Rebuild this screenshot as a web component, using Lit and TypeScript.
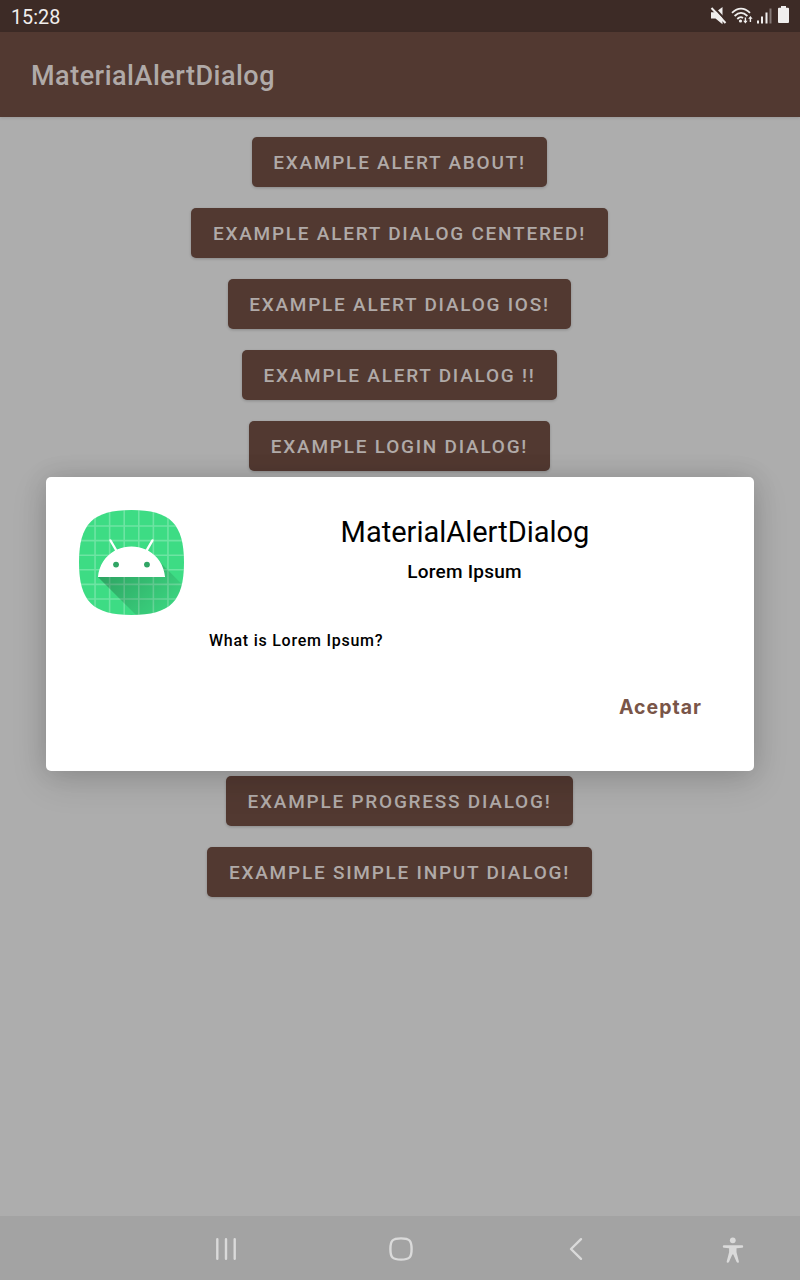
import { LitElement, html, css } from "lit";
import { customElement } from "lit/decorators.js";

const upperButtons = [
  "Example alert about!",
  "Example alert dialog centered!",
  "Example alert dialog iOS!",
  "Example alert dialog !!",
  "Example login dialog!",
];
const lowerButtons = ["Example progress dialog!", "Example simple input dialog!"];

@customElement("launcher-icon")
class LauncherIcon extends LitElement {
  static styles = css`
    :host { display: block; width: 105px; height: 105px; }
    svg { display: block; width: 100%; height: 100%; }
  `;
  render() {
    return html`<svg viewBox="18 18 72 72">
      <defs>
        <clipPath id="shape">
          <path d="M54 18C80.500 18 90 27.500 90 54S80.500 90 54 90S18 80.500 18 54S27.500 18 54 18Z" />
        </clipPath>
        <linearGradient id="shade" gradientUnits="userSpaceOnUse" x1="42.949" y1="49.590" x2="85.848" y2="92.496">
          <stop offset="0" stop-color="#000" stop-opacity=".267" />
          <stop offset="1" stop-color="#000" stop-opacity="0" />
        </linearGradient>
      </defs>
      <g clip-path="url(#shape)">
        <path fill="#3ddc84" d="M18 18h72v72H18z" />
        <path stroke="#fff" stroke-opacity=".25" stroke-width="1.100" fill="none"
          d="M29 18v72M39 18v72M49 18v72M59 18v72M69 18v72M79 18v72M18 29h72M18 39h72M18 49h72M18 59h72M18 69h72M18 79h72" />
        <path fill="url(#shade)" d="M31 63.928c0 0 6.4-11 12.1-13.1c7.2-2.6 26-1.4 26-1.4l38.1 38.1L107 108.928l-32-1L31 63.928z" />
        <path fill="#fff" d="M65.3 45.828l3.8-6.6c.2-.4.1-.9-.3-1.1c-.4-.2-.9-.1-1.1.3l-3.9 6.7c-6.3-2.8-13.4-2.8-19.7 0l-3.9-6.7c-.2-.4-.7-.5-1.1-.3C38.8 38.328 38.7 38.828 38.9 39.228l3.8 6.6C36.2 49.428 31.7 56.028 31 63.928h46C76.3 56.028 71.8 49.428 65.3 45.828z" />
        <circle cx="43.400" cy="55.400" r="2" fill="#31a565" />
        <circle cx="64.600" cy="55.400" r="2" fill="#31a565" />
      </g>
    </svg>`;
  }
}

@customElement("status-bar")
class StatusBar extends LitElement {
  static styles = css`
    :host {
      display: flex; align-items: center; justify-content: space-between;
      height: 32px; box-sizing: border-box; padding: 2px 0 0 11px;
      background: #3d2b26; color: #f0eeed; font-size: 19.800px;
    }
    .icons { display: block; width: 100px; height: 32px; margin-top: -2px; }
  `;
  render() {
    return html`<span>15:28</span>
      <svg class="icons" viewBox="700 0 100 32" fill="#f0eeed">
        <path d="M711 12.200h4.500l7-5.200v17.200l-7-5.700H711z" />
        <path d="M713 6.500l14 15" stroke="#3d2b26" stroke-width="2" />
        <path d="M711.500 8l14 15" stroke="#f0eeed" stroke-width="2" fill="none" />
        <g fill="none" stroke="#f0eeed" stroke-width="1.800">
          <path d="M732 12.800Q741 4.500 750 12.800M734.600 16Q741 9.800 747.400 16M737.300 19Q740.500 15.800 743 18.200" />
        </g>
        <circle cx="740.500" cy="21" r="1.600" />
        <path d="M744.700 17.500h1.400v3.200h1.500l-2.200 2.800l-2.200-2.800h1.500zM751.100 22h-1.400v-3.200h-1.500l2.200-2.800l2.200 2.800h-1.500z" />
        <path d="M757 20.500h2v3h-2zM761 16.500h2v7h-2zM765.500 12.500h2v11h-2z" />
        <path d="M769.500 8.500h2v15h-2z" opacity=".4" />
        <path d="M781 6h5v1.700h2q1 0 1 1V22q0 1-1 1h-9q-1 0-1-1V8.700q0-1 1-1h2z" />
      </svg>`;
  }
}

@customElement("nav-bar")
class NavBar extends LitElement {
  static styles = css`
    :host { display: block; height: 64px; background: #a3a3a3; }
    svg { display: block; }
  `;
  render() {
    return html`<svg width="800" height="64" viewBox="0 1216 800 64" fill="none" stroke="#dadada" stroke-width="2.400">
      <path stroke-linecap="round" d="M217.300 1239.200v19.600M226 1239.200v19.600M234.700 1239.200v19.600" />
      <path d="M401 1238.400C409.500 1238.400 411.600 1240.500 411.600 1249S409.500 1259.600 401 1259.600S390.400 1257.500 390.400 1249S392.500 1238.400 401 1238.400Z" />
      <path stroke-linecap="round" stroke-linejoin="round" d="M581 1239.200L571 1249L581 1258.800" />
      <g fill="#dadada" stroke="none">
        <circle cx="732.800" cy="1240.300" r="2.900" />
        <path d="M724 1245.200h18q1.200 0 1.200 1.250T742 1247.700l-5.500.6v4l2.400 9.200q.2 1.200-.9 1.200t-1.500-.9l-3.200-7.300h-1l-3.200 7.300q-.4.9-1.500.9t-.9-1.200l2.400-9.200v-4l-5.100-.6q-1.200 0-1.200-1.250T724 1245.200z" />
      </g>
    </svg>`;
  }
}

@customElement("alert-dialog")
class AlertDialog extends LitElement {
  static styles = css`
    :host {
      display: grid; grid-template-columns: 105px 1fr; column-gap: 25px;
      box-sizing: border-box; padding: 33px;
      background: #fff; border-radius: 5px; color: #000;
      box-shadow: 0 10px 36px rgba(0, 0, 0, .13), 0 0 24px rgba(0, 0, 0, .12);
    }
    .content { display: flex; flex-direction: column; }
    .title { margin-top: 3px; font-size: 29px; line-height: 38px; text-align: center; }
    .subtitle { margin: 8px 1px 0 0; font-size: 19px; line-height: 26px; font-weight: 500; letter-spacing: .25px; text-align: center; }
    .message { margin-top: 46px; font-size: 16px; line-height: 20px; font-weight: 500; letter-spacing: .75px; }
    .action {
      align-self: flex-end; margin: 41px 19px 0 0; padding: 0; border: 0; background: none;
      font: 700 19.500px/30px Inter, sans-serif; letter-spacing: 1px; color: #795548;
    }
  `;
  render() {
    return html`<launcher-icon></launcher-icon>
      <div class="content">
        <div class="title">MaterialAlertDialog</div>
        <div class="subtitle">Lorem Ipsum</div>
        <div class="message">What is Lorem Ipsum?</div>
        <button class="action">Aceptar</button>
      </div>`;
  }
}

@customElement("app-root")
class AppRoot extends LitElement {
  static styles = css`
    :host {
      display: flex; flex-direction: column; position: relative;
      width: 800px; height: 1280px; overflow: hidden;
      background: #adadad; font-family: Roboto, sans-serif;
    }
    .toolbar {
      display: flex; align-items: center; height: 85px; box-sizing: border-box; padding: 3px 31px 0;
      background: #523931; color: #b0aaa8; font-size: 27px; font-weight: 500; letter-spacing: .500px;
      box-shadow: 0 1px 3px rgba(0, 0, 0, .12);
    }
    .examples { flex: 1; display: flex; flex-direction: column; padding-top: 20px; }
    .group { display: flex; flex-direction: column; align-items: center; gap: 21px; }
    .group + .group { margin-top: 305px; }
    .example {
      height: 50px; border: 0; border-radius: 5px; padding: 1px 21.600px 0; margin-right: 1px;
      background: #523931; color: #b0aaa8;
      font: 500 19px/49px Roboto, sans-serif; letter-spacing: 1.760px; text-transform: uppercase; white-space: nowrap;
      box-shadow: 0 1px 3px rgba(0, 0, 0, .2);
    }
    .dialog { position: absolute; left: 46px; top: 477px; width: 708px; height: 294px; }
  `;
  render() {
    const group = (labels: string[]) => html`<div class="group">
      ${labels.map((label) => html`<button class="example">${label}</button>`)}
    </div>`;
    return html`<status-bar></status-bar>
      <header class="toolbar">MaterialAlertDialog</header>
      <main class="examples">${group(upperButtons)}${group(lowerButtons)}</main>
      <nav-bar></nav-bar>
      <alert-dialog class="dialog"></alert-dialog>`;
  }
}
